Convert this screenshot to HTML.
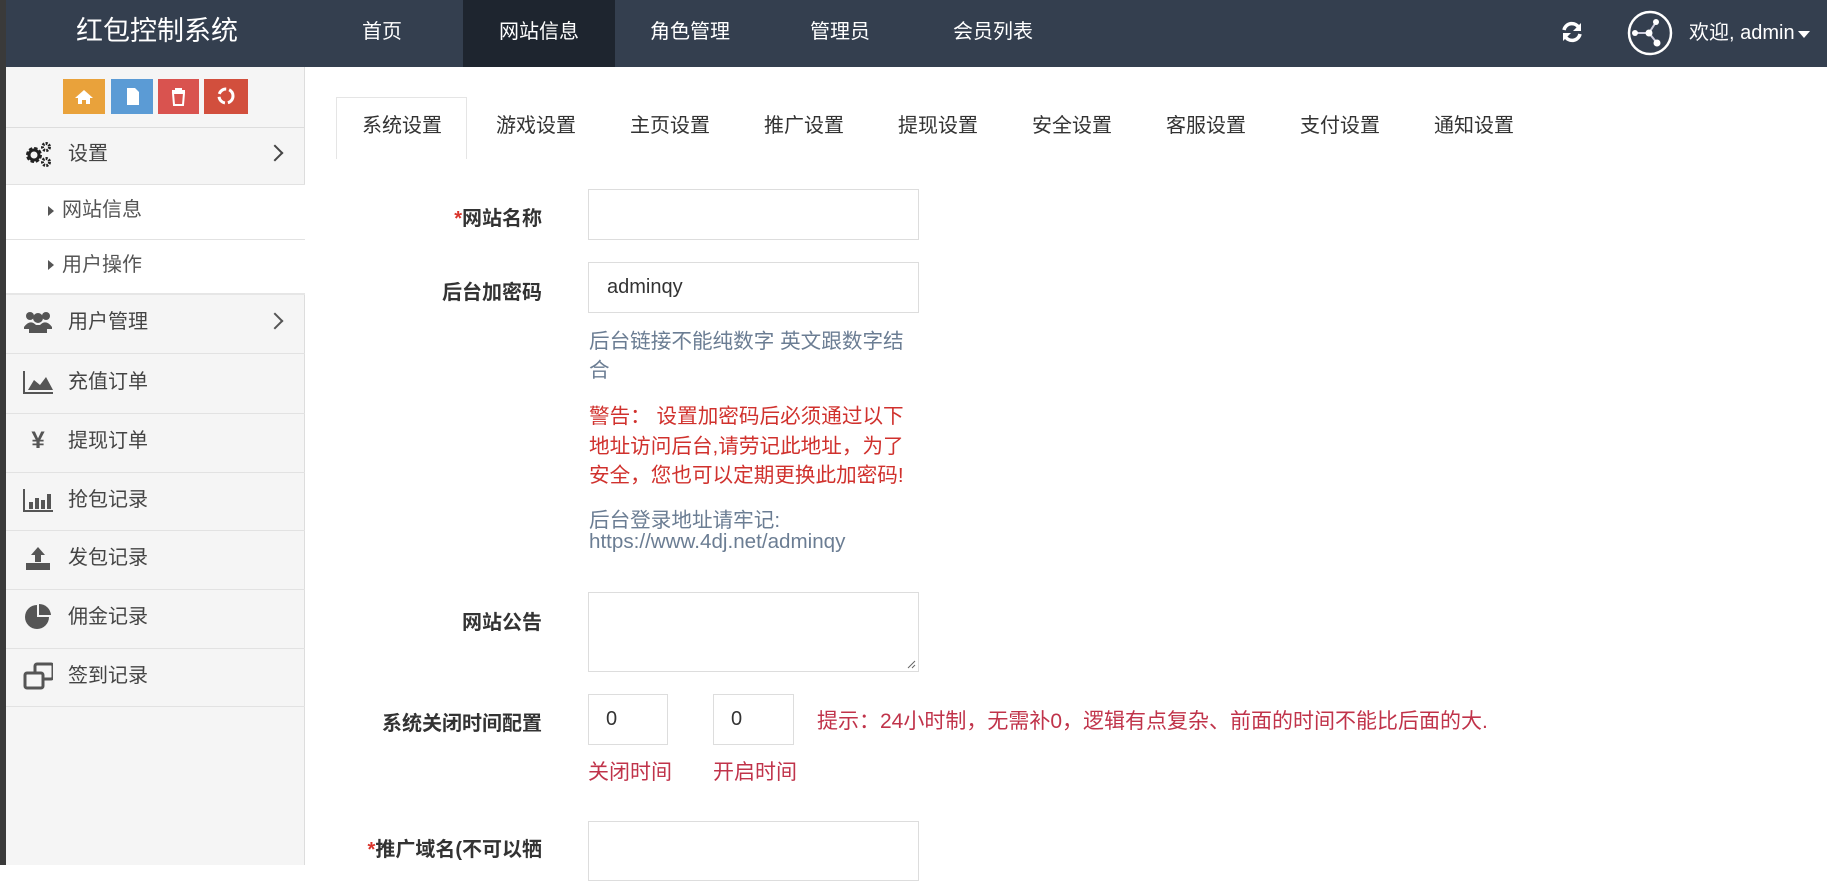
<!DOCTYPE html>
<html><head><meta charset="utf-8"><style>
*{margin:0;padding:0;box-sizing:border-box}
body{width:1827px;height:865px;overflow:hidden;background:#fff;font-family:"Liberation Sans","Noto Sans CJK SC",sans-serif;position:relative;color:#333}
.a{position:absolute;white-space:nowrap}
#strip{left:0;top:0;width:6px;height:865px;background:#3a3a3a}
#hdr{left:6px;top:0;width:1821px;height:67px;background:#343f4f}
.nav{top:0;height:67px;line-height:64px;color:#fff;font-size:20px;text-align:center}
#side{left:6px;top:67px;width:299px;height:798px;background:#f5f5f5;border-right:1px solid #ddd}
.btn{top:79px;height:35px;}
.row{left:6px;width:299px;border-top:1px solid #e2e2e2;font-size:20px;color:#444;display:flex;align-items:center}
.row .ic{position:absolute;left:17px;width:30px;height:30px;margin-top:-4px;display:flex;align-items:center;justify-content:center}
.row .t{position:absolute;left:62px;top:50%;margin-top:-17px;line-height:30px}
.sub{background:#fff}
.sub .t{left:56px;color:#555}
.chev{position:absolute;right:24px;top:50%;margin-top:-9px;width:12px;height:12px;border-right:2px solid #444;border-top:2px solid #444;transform:rotate(45deg)}
.tab{top:97px;height:61px;line-height:58px;font-size:20px;color:#333;text-align:center;width:134px}
.lbl{font-size:20px;font-weight:bold;color:#333;text-align:right;right:1285px}
.inp{border:1px solid #ddd;background:#fff}
.help{left:589px;font-size:20.6px;color:#6b7d93}
.warn{left:589px;font-size:20.6px;color:#d0312d}
.red{color:#c0334a;font-size:21px}
</style></head><body>
<div class="a" id="strip"></div>
<div class="a" id="hdr"></div>
<div class="a" style="left:76px;top:0;line-height:62px;font-size:27px;color:#fff">红包控制系统</div>
<div class="a nav" style="left:342px;width:80px">首页</div>
<div class="a nav" style="left:463px;width:152px;background:#1e252f">网站信息</div>
<div class="a nav" style="left:630px;width:120px">角色管理</div>
<div class="a nav" style="left:790px;width:100px">管理员</div>
<div class="a nav" style="left:933px;width:120px">会员列表</div>
<svg class="a" style="left:1560px;top:20px" width="24" height="24" viewBox="0 0 24 24"><path d="M4 10 A8 8 0 0 1 19 8" fill="none" stroke="#fff" stroke-width="3.5"/><path d="M21 3 V11 H13 Z" fill="#fff"/><path d="M20 14 A8 8 0 0 1 5 16" fill="none" stroke="#fff" stroke-width="3.5"/><path d="M3 21 V13 H11 Z" fill="#fff"/></svg>
<svg class="a" style="left:1627px;top:10px" width="46" height="46" viewBox="0 0 46 46"><circle cx="23" cy="23" r="21" fill="none" stroke="#fff" stroke-width="2.5"/><path d="M8 23 H22 L29 12 M22 23 L30 33" stroke="#ccd" stroke-width="2" fill="none"/><circle cx="8" cy="23" r="3" fill="#fff"/><circle cx="22" cy="23" r="3.5" fill="#fff"/><circle cx="29" cy="12" r="3" fill="#fff"/><circle cx="30" cy="33" r="3.5" fill="#fff"/></svg>
<div class="a" style="left:1689px;top:0;line-height:67px;font-size:20px;color:#fff">欢迎, admin</div>
<div class="a" style="left:1798px;top:31px;width:0;height:0;border-left:6px solid transparent;border-right:6px solid transparent;border-top:7px solid #fff"></div>

<div class="a" id="side"></div>
<div class="a btn" style="left:63px;width:42px;background:#e9a23b"><svg width="42" height="35"><path d="M21 11 L12 19 H15 V25 H19 V21 H23 V25 H27 V19 H30 Z" fill="#fff"/></svg></div>
<div class="a btn" style="left:111px;width:42px;background:#5b9bd5"><svg width="42" height="35"><path d="M16 9 H24 L28 13 V26 H16 Z" fill="#fff"/></svg></div>
<div class="a btn" style="left:158px;width:41px;background:#d9534f"><svg width="41" height="35"><path d="M14 12 H27 M18 12 V10 H23 V12 M15 14 H26 L25 26 H16 Z" stroke="#fff" stroke-width="2" fill="none"/></svg></div>
<div class="a btn" style="left:204px;width:44px;background:#d24f3d"><svg width="44" height="35"><circle cx="22" cy="17" r="7" fill="none" stroke="#fff" stroke-width="3" stroke-dasharray="9 3"/></svg></div>

<div class="a row" style="top:127px;height:57px;border-top:1px solid #ddd"><span class="ic"><svg width="30" height="28"><circle cx="11" cy="15" r="6" fill="none" stroke="#222" stroke-width="4" stroke-dasharray="3 1.7"/><circle cx="11" cy="15" r="5" fill="none" stroke="#222" stroke-width="3"/><circle cx="23" cy="7" r="3.5" fill="none" stroke="#222" stroke-width="3" stroke-dasharray="2 1.2"/><circle cx="23" cy="22" r="3.5" fill="none" stroke="#222" stroke-width="3" stroke-dasharray="2 1.2"/></svg></span><span class="t">设置</span><span class="chev"></span></div>
<div class="a row sub" style="top:184px;height:55px"><span class="a" style="left:42px;margin-top:-3px;border-left:6px solid #555;border-top:5px solid transparent;border-bottom:5px solid transparent"></span><span class="t">网站信息</span></div>
<div class="a row sub" style="top:239px;height:54px"><span class="a" style="left:42px;margin-top:-3px;border-left:6px solid #555;border-top:5px solid transparent;border-bottom:5px solid transparent"></span><span class="t">用户操作</span></div>
<div class="a row" style="top:293px;height:60px;border-top:2px solid #e6e6e6"><span class="ic"><svg width="30" height="26"><circle cx="7" cy="7" r="4" fill="#555"/><circle cx="23" cy="7" r="4" fill="#555"/><circle cx="15" cy="9" r="5" fill="#555"/><path d="M1 18 Q7 10 13 16 H17 Q23 10 29 18 V20 H24 V24 H6 V20 H1Z" fill="#555"/></svg></span><span class="t">用户管理</span><span class="chev" style="border-color:#555"></span></div>
<div class="a row" style="top:353px;height:60px"><span class="ic"><svg width="32" height="24"><path d="M1 1 V23 H31" stroke="#555" stroke-width="2" fill="none"/><path d="M5 20 L11 10 L17 15 L23 7 L30 20 Z" fill="#555"/></svg></span><span class="t">充值订单</span></div>
<div class="a row" style="top:413px;height:59px"><span class="ic" style="font-size:24px;font-weight:bold;color:#555">¥</span><span class="t">提现订单</span></div>
<div class="a row" style="top:472px;height:58px"><span class="ic"><svg width="32" height="24"><path d="M1 1 V23 H31" stroke="#555" stroke-width="2" fill="none"/><path d="M6 14h4v7H6zM12 10h4v11h-4zM18 12h4v9h-4zM24 6h4v15h-4z" fill="#555"/></svg></span><span class="t">抢包记录</span></div>
<div class="a row" style="top:530px;height:59px"><span class="ic"><svg width="28" height="26"><path d="M14 2 L21 10 H17 V17 H11 V10 H7Z" fill="#555"/><rect x="2" y="18" width="24" height="7" fill="#555"/></svg></span><span class="t">发包记录</span></div>
<div class="a row" style="top:589px;height:59px"><span class="ic"><svg width="28" height="28"><path d="M13 2 A12 12 0 1 0 25 14 H13 Z" fill="#555"/><path d="M15 1 A12 12 0 0 1 27 12 H15Z" fill="#555"/></svg></span><span class="t">佣金记录</span></div>
<div class="a row" style="top:648px;height:59px;border-bottom:1px solid #e2e2e2"><span class="ic"><svg width="32" height="28"><rect x="12" y="2" width="18" height="15" rx="2" fill="none" stroke="#555" stroke-width="3"/><rect x="2" y="11" width="18" height="15" rx="2" fill="#f5f5f5" stroke="#555" stroke-width="3"/></svg></span><span class="t">签到记录</span></div>

<div class="a" style="left:336px;top:97px;width:131px;height:62px;border:1px solid #e5e5e5;border-bottom:none;background:#fff"></div>
<div class="a tab" style="left:335px">系统设置</div>
<div class="a tab" style="left:469px">游戏设置</div>
<div class="a tab" style="left:603px">主页设置</div>
<div class="a tab" style="left:737px">推广设置</div>
<div class="a tab" style="left:871px">提现设置</div>
<div class="a tab" style="left:1005px">安全设置</div>
<div class="a tab" style="left:1139px">客服设置</div>
<div class="a tab" style="left:1273px">支付设置</div>
<div class="a tab" style="left:1407px">通知设置</div>

<div class="a lbl" style="top:202px"><span style="color:#d9342b">*</span>网站名称</div>
<div class="a inp" style="left:588px;top:189px;width:331px;height:51px"></div>
<div class="a lbl" style="top:276px">后台加密码</div>
<div class="a inp" style="left:588px;top:262px;width:331px;height:51px;font-size:20px;line-height:49px;padding-left:18px;color:#333">adminqy</div>
<div class="a help" style="top:324px">后台链接不能纯数字 英文跟数字结</div>
<div class="a help" style="top:353px">合</div>
<div class="a warn" style="top:399px">警告：&nbsp;设置加密码后必须通过以下</div>
<div class="a warn" style="top:429px">地址访问后台,请劳记此地址，为了</div>
<div class="a warn" style="top:458px">安全，您也可以定期更换此加密码!</div>
<div class="a help" style="top:503px">后台登录地址请牢记:</div>
<div class="a help" style="top:530px">https://www.4dj.net/adminqy</div>

<div class="a lbl" style="top:606px">网站公告</div>
<div class="a inp" style="left:588px;top:592px;width:331px;height:80px"><svg class="a" style="right:2px;bottom:2px" width="10" height="10"><path d="M9 2 L2 9 M9 6 L6 9" stroke="#666"/></svg></div>
<div class="a lbl" style="top:707px">系统关闭时间配置</div>
<div class="a inp" style="left:588px;top:694px;width:80px;height:51px;font-size:20px;line-height:49px;padding-left:17px">0</div>
<div class="a inp" style="left:713px;top:694px;width:81px;height:51px;font-size:20px;line-height:49px;padding-left:17px">0</div>
<div class="a red" style="left:817px;top:705px">提示：24小时制，无需补0，逻辑有点复杂、前面的时间不能比后面的大.</div>
<div class="a red" style="left:588px;top:756px">关闭时间</div>
<div class="a red" style="left:713px;top:756px">开启时间</div>
<div class="a lbl" style="top:833px"><span style="color:#d9342b">*</span>推广域名(不可以牺</div>
<div class="a inp" style="left:588px;top:821px;width:331px;height:60px"></div>
</body></html>
